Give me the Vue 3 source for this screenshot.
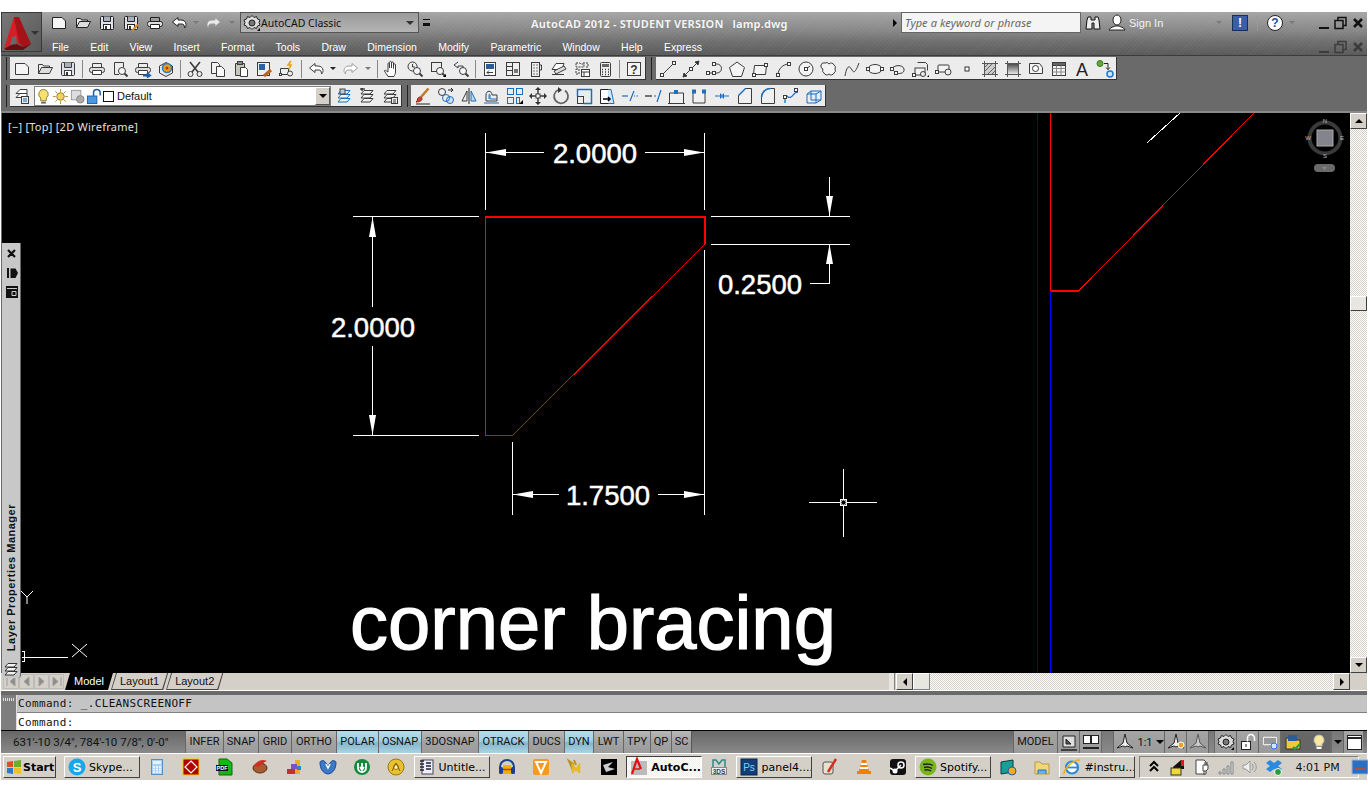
<script setup>
const mag = '<circle cx="11" cy="11" r="3.5" fill="#f4f6fa"/><path d="M13.5 13.5l3 3" stroke-width="2"/>'
const nodes = (...p) => p.map(([x, y]) => `<rect x="${x - 1.5}" y="${y - 1.5}" width="3" height="3" fill="#fff"/>`).join('')
const printer = '<path d="M4.5 7V3.5h9V7"/><rect x="1.5" y="7.5" width="15" height="5" rx="2" fill="#ddd"/><path d="M4.5 10.5h9v4h-9z" fill="#fff"/>'
const floppy = '<rect x="2.5" y="2.5" width="13" height="13" rx="1" fill="#dfe2ea"/><path d="M5.5 2.5v5h7v-5" fill="#a9b0b8"/><rect x="5.5" y="10.5" width="7" height="5" fill="#fff"/><rect x="7" y="12" width="2" height="3" fill="#333" stroke="none"/>'
const undoShape = '<path d="M8 3.5L2.5 8 8 12.5V10h4c1.5 0 2.5 1 2.5 4 1-1 1.5-2 1.5-3.5C16 8 14 6 11 6H8z" fill="#fff"/>'
const layers = '<path d="M6 3.5h9l-3 3.5H3z" fill="#f2f2f2"/><path d="M6 7.5h9l-3 3.5H3z" fill="#f2f2f2"/><path d="M6 11.5h9l-3 3.5H3z" fill="#f2f2f2"/>'

const icons = {
  new: '<path d="M2.5 3.5h9.5l3.5 3.5v7.5h-13z" fill="#f5f5f5"/>',
  open: '<path d="M2.5 13.5v-9h4l1 1.5h6v2" fill="#eee"/><path d="M2.5 13.5l3-6h11l-3 6z" fill="#ddd"/>',
  save: floppy,
  saveas: floppy + '<path d="M10 16.5l6-6" stroke="#e08a1e" stroke-width="2"/>',
  print: printer,
  preview: '<path d="M8 14.5H3.5v-12h9v5"/>' + mag,
  plot: printer + '<path d="M9 15.5h6M13 13l3 2.5-3 2" stroke="#1c5fb0" stroke-width="2"/>',
  pub3d: '<path d="M2.5 6L9 2.5 15.5 6v7L9 16.5 2.5 13z" fill="#e8e8e8"/><circle cx="10" cy="8" r="4.5" fill="#e8a020" stroke="#2a7cc0" stroke-width="1.5"/><circle cx="10" cy="8" r="1.5" fill="#c03020" stroke="none"/>',
  cut: '<circle cx="4.5" cy="14" r="2.5"/><circle cx="13.5" cy="14" r="2.5"/><path d="M6 12L14 2M12 12L4 2" stroke-width="1.6"/>',
  copy: '<path d="M2.5 2.5h6l2 2v9h-8z" fill="#f2f2f2"/><path d="M7.5 6.5h5l3 3v7h-8z" fill="#fafafa"/>',
  paste: '<path d="M3.5 3.5h9v12h-9z" fill="#c9c6bd"/><rect x="5.5" y="1.5" width="5" height="3" fill="#888"/><path d="M8.5 7.5h5l2 2v7h-7z" fill="#fff"/>',
  match: '<rect x="2.5" y="2.5" width="12" height="13" fill="#eee"/><rect x="4" y="4" width="6" height="6" fill="#2a62a8" stroke="none"/><path d="M9 16l7-6" stroke="#b8641e" stroke-width="3"/>',
  block: '<path d="M2.5 8.5h8v6h-8z" fill="#eee"/><circle cx="12" cy="13.5" r="2.5" fill="#eee"/><rect x="1.5" y="13.5" width="2" height="2" fill="#fff"/><path d="M13 1l-3 4h3l-2 4" stroke="#e8a010" stroke-width="1.6"/>',
  undo: undoShape,
  redo: '<g transform="matrix(-1 0 0 1 18 0)" stroke="#a0a0a0">' + undoShape + '</g>',
  pan: '<path d="M5 16.5c-1-2-3-4-3.5-5.5 0-1 1-1 2 0L5 12V4c0-1.5 1.5-1.5 1.5 0v4-5.5c0-1.5 2-1.5 2 0V8V3c0-1.5 2-1.5 2 0v5.5V5c0-1.5 2-1.5 2 0v7c0 2-1 3-1.5 4.5z" fill="#fff"/>',
  zoomrt: '<circle cx="6.5" cy="6.5" r="4.5"/><path d="M6.5 4v3h2.5"/>' + mag,
  zoomwin: '<rect x="2.5" y="2.5" width="10" height="9"/>' + mag + '<path d="M14 17l3-3v3z" fill="#000" stroke="none"/>',
  zoomprev: '<path d="M6 2L2 5l4 3V6h5v3" fill="none"/>' + mag,
  props: '<rect x="3.5" y="2.5" width="11" height="13" fill="#fff"/><rect x="5" y="4" width="8" height="5" fill="#2a5c9c" stroke="none"/><path d="M12 12.5H6m2-2l-2 2 2 2"/>',
  design: '<rect x="2.5" y="2.5" width="13" height="13" fill="#eee"/><path d="M8.5 2.5v13M2.5 6.5h6M2.5 10.5h6"/><rect x="10" y="9" width="4" height="4" fill="#777" stroke="none"/>',
  palette: '<rect x="4.5" y="2.5" width="8" height="14" fill="#eee"/><path d="M12.5 5h2v5h-2"/><path d="M6.5 5h1M9.5 5h1M6.5 8h1M9.5 8h1M6.5 11h1M9.5 11h1M6.5 14h1M9.5 14h1" stroke="#777" stroke-width="2"/>',
  sheet: '<path d="M6 3.5h8l-2 6H2z" fill="#fff"/><path d="M4 11l10-5 2 3-10 5z" fill="#ddd"/><path d="M2 14.5h12"/>',
  markup: '<path d="M3 3h4l1 1h3v3H3zM10 3h5v4h-3M3 9h3v5H3z" stroke-dasharray="2 1"/><rect x="8.5" y="9.5" width="8" height="7" fill="#fff"/><path d="M8.5 12h8M11 12v4.500"/>',
  calc: '<rect x="4.500" y="2.500" width="10" height="14" rx="1" fill="#eee"/><rect x="6" y="4" width="7" height="3" fill="#666" stroke="none"/><path d="M6 9.500h1M9 9.500h1M12 9.500h1M6 12h1M9 12h1M12 12h1M6 14.500h1M9 14.500h1M12 14.500h1" stroke-width="1.500"/>',
  help: '<rect x="2.500" y="2.500" width="13" height="13" fill="#f4f4f4"/><text x="9" y="14" font-size="12" font-weight="700" text-anchor="middle" fill="#333" stroke="none" font-family="Liberation Sans">?</text>',
  line: '<path d="M4 14L14 4"/>' + nodes([3, 15], [15, 3]),
  xline: '<path d="M1 17L17 1"/><path d="M1 17l4-1-3-3zM17 1l-4 1 3 3z" fill="#333"/>' + nodes([9, 9]),
  pline: '<path d="M3 13h6M9 4h3a4.500 4.500 0 0 1 0 9H9"/>' + nodes([3, 13], [9, 13], [9, 4]),
  polygon: '<path d="M9 2l7.500 5.500-3 9h-9l-3-9z" fill="#f4f4f4"/>',
  rect: '<path d="M3.500 5.500h12l-1 9h-12z" fill="#f4f4f4"/>' + nodes([3, 15], [15, 5]),
  arc: '<path d="M4 15c0-6 5-11 11-11"/>' + nodes([4, 15], [15, 4]),
  circle: '<circle cx="9" cy="9" r="7" fill="#f4f4f4"/><path d="M9 9l4-3"/>' + nodes([9, 9]),
  cloud: '<path d="M5 3a3 3 0 0 1 4 1 3 3 0 0 1 5 1 3 3 0 0 1 1 4 3 3 0 0 1-1 4 3 3 0 0 1-5 1 3 3 0 0 1-5-1 3 3 0 0 1-1-4 3 3 0 0 1 2-6z" fill="#f4f4f4"/>',
  spline: '<path d="M2 16C4 4 7 6 9 10s4 1 7-7" />',
  ellipse: '<ellipse cx="9" cy="9" rx="7" ry="4.500" fill="#f4f4f4"/>' + nodes([2, 9], [16, 9]),
  earc: '<path d="M3 9c1-4 11-5 12 0s-6 5-8 4"/>' + nodes([3, 9], [7, 13]),
  insert: '<path d="M5.500 2.500h8l2 2v6"/><rect x="3" y="8" width="10" height="7" fill="#f4f4f4"/><circle cx="11" cy="14" r="2.500" fill="#eee"/>' + nodes([2, 15]) + '<path d="M15 17l2-2v2z" fill="#000" stroke="none"/>',
  mkblock: '<rect x="3" y="5" width="11" height="7" rx="1" fill="#f4f4f4"/><circle cx="13" cy="12" r="3" fill="#eee"/>' + nodes([2, 12]),
  point: '<rect x="7" y="7" width="4" height="4" fill="#fff" stroke="#333"/>',
  hatch: '<rect x="3.500" y="3.500" width="11" height="11" fill="#ccc"/><path d="M3 8l5-5M3 12l9-9M6 15l9-9M10 15l5-5" stroke="#666"/><path d="M1 3.500h16M1 14.500h16M3.500 1v16M14.500 1v16" stroke="#555"/>',
  gradient: '<defs><linearGradient id="gh" x1="0" y1="0" x2="0" y2="1"><stop offset="0" stop-color="#444"/><stop offset="1" stop-color="#eee"/></linearGradient></defs><rect x="3.500" y="3.500" width="11" height="11" fill="url(#gh)"/><path d="M1 3.500h16M1 14.500h16M3.500 1v16M14.500 1v16" stroke="#555"/>',
  region: '<path d="M2.500 3.500h10l3 4v6h-13z" fill="#f4f4f4"/><circle cx="8.500" cy="8.500" r="3" fill="#fff"/>',
  table: '<rect x="2.500" y="2.500" width="13" height="13" fill="#f4f4f4"/><rect x="2.500" y="2.500" width="13" height="3" fill="#666"/><path d="M2.500 8.500h13M2.500 12h13M6.500 5.500v10M11 5.500v10" stroke="#888"/>',
  mtext: '<text x="9" y="15.500" font-size="18" text-anchor="middle" fill="#222" stroke="none" font-family="Liberation Sans">A</text>',
  addsel: '<circle cx="4" cy="3.500" r="3" fill="#5ea83c" stroke="#3a7a22"/><circle cx="14" cy="14" r="3" fill="#cfe6fa" stroke="#1c7ad0" stroke-width="1.500"/><path d="M8 3.500h4v6m-2-2l2 2 2-2" stroke="#222"/>',
  states: '<path d="M7 2.500h7v4H3z" fill="#fff"/><path d="M7 6.500h7v4H3z" fill="#fff"/><rect x="8.500" y="9.500" width="7" height="7" fill="#e8e8e8"/><path d="M10 12h4M10 14h4" stroke="#1c6fc0"/>',
  layprop: '<g stroke="#1c6fc0">' + layers + '</g><rect x="5" y="2" width="5" height="5" fill="#bcd" stroke="#444"/>',
  laycur: '<g>' + layers + '</g><path d="M2 2h5M4 1v3" stroke="#000"/>',
  laystate: layers + '<rect x="10.500" y="10.500" width="6" height="6" fill="#eee"/><path d="M12 13h3M12 15h3"/>',
  brush: '<path d="M14.500 1.500L7 10" stroke="#c07a24" stroke-width="2.500"/><path d="M4 11c2-2 4-1 4 1s-3 3-6 3c2-1 1-3 2-4z" fill="#d2432c" stroke="#8c2a1a"/><path d="M2 17h14" stroke="#222"/>',
  erase: '<circle cx="5" cy="5" r="3.500" fill="#eee"/><circle cx="13" cy="13" r="3.500" fill="#cfe2f7" stroke="#1c6fc0"/><circle cx="9" cy="11" r="3.500" stroke="#1c6fc0"/><path d="M11 3h5m-2-2l2 2-2 2" stroke="#222"/>',
  mirror: '<path d="M9 1v16" stroke="#222"/><path d="M7 4v10H2z" fill="#eee"/><path d="M11 4v10h5z" fill="#bcd9f4" stroke="#1c6fc0"/>',
  offset: '<path d="M3 14V8c0-5 6-5 6 0h5v6z" fill="#eee"/><path d="M1 16h15M6 12V8c0-1 1-1 1 0v4h7" stroke="#1c6fc0"/>',
  array: '<rect x="1.500" y="1.500" width="6" height="6" stroke="#1c6fc0"/><rect x="10.500" y="1.500" width="6" height="6" stroke="#1c6fc0"/><rect x="1.500" y="10.500" width="6" height="6" stroke="#1c6fc0"/><rect x="10.500" y="10.500" width="3" height="6" stroke="#1c6fc0"/><path d="M13 17l4-4v4z" fill="#000" stroke="none"/>',
  move: '<path d="M9 2v14M2 9h14" stroke-width="1.500"/><path d="M9 0l3 3H6zM9 18l-3-3h6zM0 9l3-3v6zM18 9l-3 3V6z" fill="#333" stroke="none"/><rect x="7" y="7" width="4" height="4" fill="#fff"/>',
  rotate: '<path d="M13 3.500A7 7 0 1 1 6 3" stroke-width="1.800" stroke="#666"/><path d="M6 0v6l4-3z" fill="#333" stroke="none"/>',
  scale: '<rect x="2.500" y="9.500" width="6" height="7" fill="#eee"/><path d="M2.500 9.500v-7h14v14h-8" stroke="#1c6fc0" stroke-width="1.500"/>',
  stretch: '<path d="M2.500 2.500h8v14h-8z" fill="#fff" stroke="#222"/><path d="M10 2.500h3l3 14h-6" stroke="#1c6fc0" fill="#d3e6f8"/><path d="M5 12h7m-2-2l2 2-2 2" stroke="#000" stroke-width="1.500"/>',
  trim: '<path d="M9 14l4-10" stroke="#1c6fc0" stroke-width="1.200"/><path d="M1 9h6" stroke="#1c6fc0" stroke-width="1.200"/><path d="M13 9h1M15.500 9h1.500" stroke="#1c6fc0"/>',
  extend: '<path d="M1 9h7" stroke="#222" stroke-width="1.200"/><path d="M10 9h2" stroke="#1c6fc0"/><path d="M13 15l4-12" stroke="#1c6fc0" stroke-width="1.200"/>',
  breakpt: '<path d="M2.500 16V6h14v10" fill="#f0f0f0"/><path d="M1 16.500h17"/><rect x="7" y="3" width="4" height="4" fill="#1c6fc0" stroke="none"/>',
  breakln: '<path d="M3 4v12h12V4" fill="#f0f0f0"/><rect x="2" y="2.500" width="4" height="4" fill="#1c6fc0" stroke="none"/><rect x="12" y="2.500" width="4" height="4" fill="#1c6fc0" stroke="none"/><path d="M6 4h6" stroke="#f0f0f0"/>',
  join: '<path d="M2 9h14" stroke="#1c6fc0"/><path d="M7 6v6l3-3zM11 6v6L8 9z" fill="#1c6fc0" stroke="none"/>',
  chamfer: '<path d="M2.500 16.500v-8l7-7h6v15z" fill="#f0f0f0"/><path d="M2.500 8.500l7-7" stroke="#1c6fc0" stroke-width="1.500"/>',
  fillet: '<path d="M2.500 16.500v-6c0-5 4-9 9-9h4v15z" fill="#f0f0f0"/><path d="M2.500 10.500c0-5 4-9 9-9" stroke="#1c6fc0" stroke-width="1.500"/>',
  blend: '<path d="M3 16V9c2-2 3 3 6 1s3-5 7-5" stroke="#1c6fc0" stroke-width="1.300"/>' + nodes([3, 10], [14, 3]),
  explode: '<path d="M6 4h10v9H6z" stroke="#1c6fc0" fill="#e4eef8"/><path d="M2 7h9v9H2zM2 7l4-3M11 7l5-3M11 16l5-3" stroke="#1c6fc0"/>'
}

const toolbar1 = ['new', 'open', 'save', '|', 'print', 'preview', 'plot', 'pub3d', '|', 'cut', 'copy', 'paste', 'match', 'block', '|', 'undo', 'v', 'redo', 'v2', '|', 'pan', 'zoomrt', 'zoomwin', 'zoomprev', '|', 'props', 'design', 'palette', 'sheet', 'markup', 'calc', '|', 'help']
const toolbar2 = ['line', 'xline', 'pline', 'polygon', 'rect', 'arc', 'circle', 'cloud', 'spline', 'ellipse', 'earc', 'insert', 'mkblock', 'point', 'hatch', 'gradient', 'region', 'table', 'mtext', 'addsel']
const toolbar4 = ['brush', 'erase', 'mirror', 'offset', 'array', 'move', 'rotate', 'scale', 'stretch', 'trim', 'extend', 'breakpt', 'breakln', 'join', 'chamfer', 'fillet', 'blend', 'explode']
const qat = [['new', 24], ['open', 24], ['save', 24], ['saveas', 24], ['print', 24], ['undo', 23]]
const menus = ['File', 'Edit', 'View', 'Insert', 'Format', 'Tools', 'Draw', 'Dimension', 'Modify', 'Parametric', 'Window', 'Help', 'Express']

const statusToggles = [
  ['INFER', 38], ['SNAP', 35], ['GRID', 33], ['ORTHO', 45], ['POLAR', 42, true], ['OSNAP', 43, true],
  ['3DOSNAP', 57], ['OTRACK', 50, true], ['DUCS', 36], ['DYN', 29, true], ['LWT', 30], ['TPY', 27], ['QP', 21], ['SC', 20]
]

const taskIcons = {
  calc: '<rect x="3.500" y="1.500" width="11" height="15" fill="#a8d0f0" stroke="#5a90c0"/><rect x="5" y="3" width="8" height="3" fill="#e4f2fc" stroke="none"/><path d="M5 9h8M5 11.500h8M5 14h8" stroke="#fff" stroke-dasharray="2 1" stroke-width="1.500"/>',
  red: '<rect x="1" y="1" width="16" height="16" fill="#b00000" stroke="#e8d000"/><path d="M9 3l6 6-6 6-6-6z" fill="#b00000" stroke="#fff" stroke-width="1.200"/>',
  pdf: '<path d="M3 1h8l5 4v12H3z" fill="#14b814" stroke="#0a6a0a"/><rect x="0" y="7" width="12" height="6" fill="#111" stroke="none"/><text x="6" y="12" font-size="5.500" font-weight="700" text-anchor="middle" fill="#fff" stroke="none" font-family="Liberation Sans">PDF</text>',
  ccl: '<ellipse cx="9" cy="10" rx="7" ry="5" fill="#a85a30" stroke="#5a2a10"/><path d="M3 8c3-6 9-7 13-5-3 1-6 3-8 6" fill="#d03020" stroke="none"/>',
  blocks: '<rect x="10" y="2" width="5" height="14" fill="#e8b020" stroke="none"/><rect x="2" y="11" width="8" height="5" fill="#c03030" stroke="none"/><rect x="6" y="6" width="6" height="5" fill="#8050c0" stroke="none"/><rect x="12" y="8" width="4" height="4" fill="#3080d0" stroke="none"/>',
  shield: '<path d="M1 4c2-2 4-2 6 1l2 3 2-3c2-3 4-3 6-1 0 6-2 11-8 12C3 15 1 10 1 4z" fill="#3c78c8" stroke="#1c4a90"/><path d="M7 6l2 4 2-4" stroke="#fff" stroke-width="1.500"/>',
  torrent: '<circle cx="9" cy="9" r="8" fill="#128a3c" stroke="none"/><path d="M5 5v5a4 4 0 0 0 8 0V5M9 5v6M7 9l2 3 2-3" stroke="#fff" stroke-width="1.800"/>',
  disc: '<circle cx="9" cy="9" r="8" fill="#e8c030" stroke="#9a7a10"/><circle cx="9" cy="9" r="2.500" fill="#fff4b0" stroke="#9a7a10"/><path d="M5 13l4-8 4 8" stroke="#7a5a00"/>',
  untitled: '<rect x="4" y="2" width="11" height="14" fill="#eef" stroke="#445"/><path d="M2 3h4M2 6h4M2 9h4M2 12h4M8 5h5M8 8h5M8 11h5" stroke="#223" stroke-width="1.300"/>',
  audio: '<path d="M2 11V9a7 7 0 0 1 14 0v2" stroke="#1c3f90" stroke-width="2"/><rect x="1" y="9" width="4" height="7" rx="1.500" fill="#1c3f90" stroke="none"/><rect x="13" y="9" width="4" height="7" rx="1.500" fill="#1c3f90" stroke="none"/><rect x="5" y="7" width="8" height="9" fill="#f0b000" stroke="none"/><path d="M5 11.500h8" stroke="#d03020" stroke-width="1.500"/>',
  vector: '<rect x="1" y="1" width="16" height="16" rx="2" fill="#f49a1c" stroke="none"/><path d="M4 4h10L9 15z" fill="none" stroke="#fff" stroke-width="2"/>',
  star: '<path d="M3 3l4 3-1 4zM8 2l2 5" stroke="#b89020" stroke-width="2"/><path d="M7 15V8l3 4 3-4v7" stroke="#e8b820" stroke-width="2.500"/>',
  dark: '<rect x="1" y="1" width="16" height="16" fill="#000" stroke="none"/><path d="M3 7l10-3-5 5 7 2-9 3z" fill="#ccc" stroke="none"/>',
  acad: '<rect x="1" y="3" width="16" height="14" fill="#bbb" stroke="none"/><path d="M2 16L7 1l4 10" stroke="#e01010" stroke-width="2.200"/><path d="M4 11h6" stroke="#e01010" stroke-width="1.500"/>',
  max: '<rect x="1.500" y="9.500" width="15" height="7" fill="#eee" stroke="#888"/><text x="9" y="15.500" font-size="6.500" font-weight="700" text-anchor="middle" fill="#345" stroke="none" font-family="Liberation Sans">3DS</text><path d="M3 9V2l3 0 3 4 3-4h3v7" stroke="#2a8a8a" stroke-width="1.500"/>',
  ps: '<rect x="1" y="1" width="16" height="16" fill="#123e78" stroke="#0a2448"/><text x="9" y="13" font-size="10" text-anchor="middle" fill="#8ec8f4" stroke="none" font-family="Liberation Sans">Ps</text>',
  pen: '<rect x="2" y="4" width="10" height="12" rx="2" fill="#e8e0d0" stroke="#555"/><path d="M15 1L7 14" stroke="#d03020" stroke-width="2.500"/>',
  vlc: '<path d="M7 2h4l3 11H4z" fill="#f08000" stroke="none"/><path d="M6 6h6M5 10h8" stroke="#fff" stroke-width="2"/><rect x="2" y="13" width="14" height="3" fill="#f08000" stroke="none"/>',
  steam: '<rect x="1" y="1" width="16" height="16" rx="3" fill="#111" stroke="none"/><circle cx="12" cy="7" r="3" fill="#111" stroke="#fff" stroke-width="1.500"/><circle cx="6" cy="13" r="2.500" fill="#fff" stroke="none"/><path d="M1 10l5 3 6-6" stroke="#fff" stroke-width="1.500"/>',
  spotify: '<circle cx="9" cy="9" r="8.500" fill="#7ab51d" stroke="none"/><path d="M4 6.500c4-1 7-1 10 1M5 9.500c3-1 6-.5 8 1M5.500 12c2.500-.5 5-.5 6.500 1" stroke="#222" stroke-width="1.500"/>',
  media: '<path d="M2 4l12-2v12L2 16z" fill="#18a098" stroke="#0a3a40"/><circle cx="13" cy="13" r="4" fill="#e8b020" stroke="#2a5aa0"/>',
  folder: '<path d="M2 4h5l2 2h7v10H2z" fill="#f0d878" stroke="#b89a40"/><path d="M5 16v-4h8v4" fill="#6ab0e0" stroke="#2a70b0"/>',
  ie: '<circle cx="9" cy="9.500" r="6" fill="#fff" stroke="#2a8ad8" stroke-width="2.200"/><path d="M4 9.500h11" stroke="#2a8ad8" stroke-width="1.800"/><path d="M1 16c0-5 8-14 16-14" stroke="#e8b020" stroke-width="1.500"/>'
}

const taskbar = [
  { text: 'Skype...', svg: '<circle cx="9" cy="9" r="8.500" fill="#18a8e8" stroke="none"/><text x="9" y="14" font-size="13" font-weight="700" text-anchor="middle" fill="#fff" stroke="none" font-family="Liberation Sans">S</text>' },
  { slots: ['calc', 'red', 'pdf', 'ccl', 'blocks', 'shield', 'torrent', 'disc'] },
  { text: 'Untitle...', svg: taskIcons.untitled },
  { slots: ['audio', 'vector', 'star', 'dark'] },
  { text: 'AutoC...', svg: taskIcons.acad, active: true },
  { slots: ['max'] },
  { text: 'panel4....', svg: taskIcons.ps },
  { slots: ['pen', 'vlc', 'steam'] },
  { text: 'Spotify...', svg: taskIcons.spotify },
  { slots: ['media', 'folder'] },
  { text: '#instru...', svg: taskIcons.ie }
]

const trayIcons = [
  '<path d="M5 8l4-4 4 4M5 13l4-4 4 4" stroke="#000" stroke-width="2"/>',
  '<path d="M4 9l8-7h3v9H4z" fill="#111"/><path d="M12 2h3v6h-3z" fill="#d02020" stroke="none"/><rect x="2" y="10" width="10" height="7" fill="#f0d838" stroke="#333"/>',
  '<path d="M3 2h8l2 2v12H3z" fill="#fff" stroke="#444"/><path d="M10 7h5v4l-2 2h-3zM12 4v3M14 4v3M11 13v4" fill="#fff" stroke="#444"/>',
  '<path d="M2 14h2v2H2zM6 11h2v5H6zM10 8h2v8h-2zM14 4h2v12h-2z" fill="#ddd" stroke="#888"/>',
  '<path d="M2 7h3l4-4v12l-4-4H2z" fill="#eee" stroke="#999"/><path d="M11 6c1.500 2 1.500 4 0 6M13 4c3 3 3 7 0 10" stroke="#999"/>',
  '<path d="M5 2l4 3 4-3 4 3-4 3 4 3-4 3-4-3-4 3-4-3 4-3-4-3z" fill="#2a8ae0" stroke="none"/><circle cx="13" cy="14" r="3.500" fill="#2a9a3a" stroke="#fff"/>'
]

const sbRight = [
  '<path d="M3 3v11h12V3z" fill="#ddd" stroke="#222"/><path d="M6 6v5h5z" fill="#555"/><path d="M1 17h16" stroke="#222" stroke-width="1.500"/>',
  '<rect x="1.500" y="2.500" width="7" height="8" fill="#fff" stroke="#222"/><rect x="9.500" y="2.500" width="7" height="8" fill="#fff" stroke="#222"/><path d="M1 15h16" stroke="#222" stroke-width="2"/>'
]
const sbGear = '<path d="M9 1.500l2 2 2.500-1 1 2.500 2.500 1-1 2.500 1 2.500-2.500 1-1 2.500-2.500-1-2 2-2-2-2.500 1-1-2.500-2.500-1 1-2.500-1-2.500 2.500-1 1-2.500 2.500 1z" fill="#ddd" stroke="#222"/><circle cx="9" cy="9" r="3" fill="#777" stroke="#222"/><path d="M14 17l3-3v3z" fill="#000" stroke="none"/>'
const sbLock = '<rect x="2.500" y="8.500" width="9" height="8" fill="#fff" stroke="#222"/><path d="M8.500 8.500V5a3.500 3.500 0 0 1 7 0v3" stroke="#fff" stroke-width="1.500"/><path d="M7 11v3" stroke="#222"/>'
const sbHw = '<rect x="2.500" y="4.500" width="13" height="7" fill="#999" stroke="#eee"/><path d="M4 3v2M7 3v2M10 3v2M13 3v2M4 11v2M7 11v2" stroke="#ddd"/><circle cx="13" cy="13" r="3" fill="#cfe6fa" stroke="#2a7ad0"/>'
const sbAnno = '<path d="M9 1l2 9 6 5-6-2-2 1-2-1-6 2 6-5z" fill="#eee" stroke="#222"/>'
const sbScale = sbAnno + '<circle cx="14" cy="12" r="3" fill="#f0a020" stroke="#fff"/>'
const sbAuto = '<g opacity=".55">' + sbAnno + '</g>'
const sbFolder = '<path d="M2 5h5l1 2h8v9H2z" fill="#f0c838" stroke="#333"/><rect x="4" y="2" width="9" height="6" fill="#2a5c9c" stroke="none"/><path d="M9 14l2 2 5-5" stroke="#2a9a3a" stroke-width="2"/>'
const sbBulb = '<path d="M9 2a5 5 0 0 1 3 9v2H6v-2a5 5 0 0 1 3-9z" fill="#f8e8a0" stroke="#bbb"/><path d="M6.500 15h5" stroke="#fff" stroke-width="2"/>'
const sbWindow = '<rect x="2.500" y="2.500" width="14" height="14" fill="#fff" stroke="#222"/><path d="M2.500 5h14" stroke="#222" stroke-width="2"/>'

const layerIcons = [
  '<path d="M9 1.500a5 5 0 0 1 3 9v3H6v-3a5 5 0 0 1 3-9z" fill="#f6e070" stroke="#8c7a30"/><path d="M6.500 15.500h5" stroke="#666" stroke-width="2"/>',
  '<circle cx="9" cy="9" r="4" fill="#f6d060" stroke="#8c7a30"/><path d="M9 1v3M9 14v3M1 9h3M14 9h3M3.500 3.500l2 2M12.500 12.500l2 2M3.500 14.500l2-2M12.500 5.500l2-2" stroke="#b09030"/>',
  '<rect x="2.500" y="2.500" width="10" height="10" fill="#ddd" stroke="#999"/><circle cx="12" cy="12" r="4" fill="#aaa" stroke="#888"/>',
  '<rect x="1.500" y="8.500" width="10" height="8" fill="#4a98e0" stroke="#1c5fa0"/><path d="M8 8.500V5a3.500 3.500 0 0 1 7 0v3" stroke="#1c5fa0" stroke-width="1.600"/>'
]
</script>

<template>
  <div class="window">
    <header class="titlebar">
      <div class="appbtn">
        <svg width="34" height="38" viewBox="0 0 34 38" fill="none">
          <path d="M1 35L11 3l5 0 4 26-6 1-1-8-4 1-2 8z" fill="#d51f26" />
          <path d="M11 3l5 0 12 27-8 3-4-4z" fill="#a51218" />
          <path d="M1 35l7-4 6-1 6 3 8-3-8 6H3z" fill="#6d0c10" />
        </svg>
        <span class="tri dark"></span>
      </div>
      <div class="titlecol">
        <div class="qatrow">
          <span v-for="q in qat" :key="q[0]" class="qbtn" :class="'w' + q[1]">
            <svg class="ic" viewBox="0 0 18 18" fill="none" stroke="#222" v-html="icons[q[0]]"></svg>
          </span>
          <span class="qdrop"><span class="tri small"></span></span>
          <span class="qbtn w24 dim"><svg class="ic" viewBox="0 0 18 18" fill="none" stroke="#222" v-html="icons.redo"></svg></span>
          <span class="qdrop"><span class="tri small"></span></span>
          <div class="workspace-select">
            <svg class="ic ws-gear" viewBox="0 0 18 18" fill="none" stroke="#444" v-html="sbGear"></svg>
            <span class="ws-name">AutoCAD Classic</span>
            <span class="tri dark ws-arrow"></span>
          </div>
          <span class="qmore"></span>
          <span class="apptitle">AutoCAD 2012 - STUDENT VERSION &nbsp; lamp.dwg</span>
          <span class="flyout"></span>
          <div class="search">Type a keyword or phrase</div>
          <svg class="binoc" width="16" height="16" viewBox="0 0 16 16" fill="#eee" stroke="#111">
            <path d="M2 5l1-3h3v3h4V2h3l1 3 1 9H9V8H7v6H1z" />
          </svg>
          <svg class="person" width="18" height="18" viewBox="0 0 18 18" fill="#fff" stroke="#222">
            <ellipse cx="9" cy="6" rx="4" ry="5" />
            <path d="M1 16c1-3 5-3 6-4h4c1 1 5 1 6 4z" />
          </svg>
          <span class="signin">Sign In</span>
          <span class="tri small signin-arrow"></span>
          <span class="infobtn">!</span>
          <span class="qsep"></span>
          <span class="helpbtn">?</span>
          <span class="tri small help-arrow"></span>
          <svg class="winctl" width="48" height="14" viewBox="0 0 48 14" fill="none" stroke="#111">
            <path d="M0 12h10" stroke-width="2" />
            <path d="M16 4.500h8v8h-8zM19 4V1.500h8v8h-3" stroke-width="1.500" />
            <path d="M35 3l8 8M43 3l-8 8" stroke-width="2.500" />
          </svg>
        </div>
        <div class="menurow">
          <nav class="menus">
            <span v-for="m in menus" :key="m">{{ m }}</span>
          </nav>
          <svg class="winctl second" width="48" height="14" viewBox="0 0 48 14" fill="none" stroke="#3c3c3c">
            <path d="M0 12h10" stroke-width="2" />
            <path d="M16 4.500h8v8h-8zM19 4V1.500h8v8h-3" stroke-width="1.500" />
            <path d="M35 3l8 8M43 3l-8 8" stroke-width="2.500" />
          </svg>
        </div>
      </div>
    </header>

    <section class="toolarea">
      <div class="tbrow">
        <div class="grip"></div>
        <div class="tb">
          <template v-for="(t, i) in toolbar1" :key="i">
            <span v-if="t === '|'" class="tsep"></span>
            <span v-else-if="t === 'v'" class="tdrop"><span class="tri small black"></span></span>
            <span v-else-if="t === 'v2'" class="tdrop"><span class="tri small"></span></span>
            <span v-else class="tbtn"><svg class="ic" viewBox="0 0 18 18" fill="none" stroke="#3c3c3c" v-html="icons[t]"></svg></span>
          </template>
        </div>
        <div class="grip wide"></div>
        <div class="tb">
          <span v-for="t in toolbar2" :key="t" class="tbtn"><svg class="ic" viewBox="0 0 18 18" fill="none" stroke="#3c3c3c" v-html="icons[t]"></svg></span>
        </div>
      </div>
      <div class="tbrow second">
        <div class="grip"></div>
        <div class="tb">
          <span class="tbtn"><svg class="ic" viewBox="0 0 18 18" fill="none" stroke="#3c3c3c" v-html="icons.states"></svg></span>
          <div class="layerselect">
            <svg v-for="(l, i) in layerIcons" :key="i" class="ic lay" viewBox="0 0 18 18" fill="none" v-html="l"></svg>
            <span class="swatch"></span>
            <span class="layername">Default</span>
            <span class="combo"><span class="tri black"></span></span>
          </div>
          <span class="tbtn"><svg class="ic" viewBox="0 0 18 18" fill="none" stroke="#3c3c3c" v-html="icons.layprop"></svg></span>
          <span class="tbtn"><svg class="ic" viewBox="0 0 18 18" fill="none" stroke="#3c3c3c" v-html="icons.laycur"></svg></span>
          <span class="tbtn"><svg class="ic" viewBox="0 0 18 18" fill="none" stroke="#3c3c3c" v-html="icons.laystate"></svg></span>
        </div>
        <div class="grip mid"></div>
        <div class="tb">
          <span v-for="t in toolbar4" :key="t" class="tbtn"><svg class="ic" viewBox="0 0 18 18" fill="none" stroke="#3c3c3c" v-html="icons[t]"></svg></span>
        </div>
      </div>
    </section>

    <section class="drawing">
      <div class="canvas">
        <svg class="model" viewBox="2 113 1347 560" width="1347" height="560" fill="none" shape-rendering="crispEdges">
          <g stroke="#fff">
            <path d="M485.500 133V210M704.500 133V210M704.500 250V515M512.500 442V515" />
            <path d="M353 216.500H479M353 435.500H479M711 216.500H850M711 244.500H850" />
            <path d="M485 152.500H544M645 152.500H704M372.500 217V307M372.500 346V435M513 494.500H559M658 494.500H704" />
            <path d="M829.500 177V216M829.500 244V283.500H810" />
            <path d="M1147 143L1180 113" />
            <path d="M843.500 469V537M809 502.500H877" />
            <path d="M22 657.500H68" />
            <path d="M21.500 651.500H24V661.500H21.500" />
            <path d="M21 591l6 6 6-6M27 597v7M72 644l15 13M87 644l-15 13" shape-rendering="auto" />
          </g>
          <g fill="#fff" shape-rendering="auto">
            <path d="M486 152.500l20-3.500v7zM704 152.500l-20-3.500v7z" />
            <path d="M513 494.500l20-3.500v7zM704 494.500l-20-3.500v7z" />
            <path d="M372.500 217l-3.500 20h7zM372.500 435l-3.500-20h7z" />
            <path d="M829.500 216l-3.500-20h7zM829.500 244l-3.500 20h7z" />
          </g>
          <rect x="840.500" y="499.500" width="6" height="6" stroke="#fff" fill="#000" />
          <circle cx="843.500" cy="502.500" r="2.500" stroke="#ccc" shape-rendering="auto" />

          <g stroke="#f00">
            <path d="M485 216H705M485 217H705" />
            <path d="M704.500 216V244M705.500 216V244" />
            <path d="M485.500 216V435.500M485 435.500H512.500" />
            <path d="M704.500 244.500L512.500 435.500" />
            <path d="M1050.500 113V290" />
            <path d="M1050 290H1079M1050 291H1079" />
            <path d="M1079 290.500L1254 113" />
          </g>
          <path d="M1037.500 113V673" stroke="#0000c8" />
          <path d="M1050.500 291V673" stroke="#0000ff" />

          <g fill="#fff" shape-rendering="auto" text-anchor="middle">
            <g stroke="#fff" stroke-width="0.500">
              <text x="595" y="163" font-size="27.500">2.0000</text>
              <text x="373" y="336.500" font-size="27.500">2.0000</text>
              <text x="608" y="505" font-size="27.500">1.7500</text>
              <text x="760" y="293.500" font-size="27.500">0.2500</text>
            </g>
            <text x="593" y="649" font-size="76" stroke="#fff" stroke-width="1.200">corner bracing</text>
          </g>
        </svg>

        <span class="viewlabel">[−] [Top] [2D Wireframe]</span>

        <div class="viewcube">
          <svg width="44" height="62" viewBox="0 0 44 62" fill="none">
            <circle cx="22" cy="22" r="15.500" stroke="#3a3a3a" stroke-width="4" />
            <rect x="14" y="14" width="16" height="16" fill="#84848c" stroke="#aaa" />
            <g fill="#bbb" font-size="6" font-family="Liberation Sans" text-anchor="middle">
              <text x="22" y="7">N</text>
              <text x="22" y="42">S</text>
              <text x="5" y="24">W</text>
              <text x="39" y="24">E</text>
            </g>
            <rect x="11" y="48" width="21" height="8" rx="4" fill="#6a6a6a" />
            <path d="M19 51h5l-2.500 3z" fill="#8a8a8a" />
          </svg>
        </div>

        <aside class="palette">
          <svg width="16" height="56" viewBox="0 0 16 56" fill="none" class="palbtns">
            <path d="M5 5l7 7M12 5l-7 7" stroke="#111" stroke-width="2.200" />
            <path d="M4 23h2v10H4z" fill="#111" />
            <path d="M7.500 23.500h5L15 28l-2.500 5h-5z" fill="#111" />
            <path d="M3 41h12v12H3z" fill="#111" />
            <path d="M9 46.500h4v4H9zM4 43.500h10" stroke="#ccc" />
          </svg>
          <span class="paltitle">Layer Properties Manager</span>
          <div class="paltool">
            <svg width="18" height="18" viewBox="0 0 18 18" fill="none" stroke="#333" v-html="layers"></svg>
          </div>
        </aside>
      </div>
      <div class="vscroll">
        <span class="sbtn"><span class="tri up black"></span></span>
        <div class="vtrack"><span class="vthumb"></span></div>
        <span class="sbtn"><span class="tri black"></span></span>
      </div>
    </section>

    <div class="hbar">
      <div class="tabnav">
        <svg width="63" height="15" viewBox="0 0 63 15" fill="#8c8c8c" stroke="#9c9c9c">
          <path d="M5 3v9M13 3L8 7.500 13 12zM27 3l-5 4.500L27 12zM37 3l5 4.500L37 12zM51 3l5 4.500L51 12zM59 3v9" />
          <path d="M1.500 .5h15v14h-15zM17.500 .5h14v14h-14zM32.500 .5h14v14h-14zM47.500 .5h14v14h-14z" fill="none" stroke="#bbb" />
        </svg>
      </div>
      <div class="tabs">
        <span class="tab active">Model</span>
        <span class="tab">Layout1</span>
        <span class="tab">Layout2</span>
      </div>
      <div class="hfill"></div>
      <span class="splitter"></span>
      <span class="sbtn h"><span class="tri left black"></span></span>
      <span class="hthumb"></span>
      <div class="htrack"></div>
      <span class="sbtn h"><span class="tri right black"></span></span>
      <span class="corner"></span>
    </div>

    <div class="strip"></div>

    <section class="command">
      <div class="cmdgrip"><span></span></div>
      <div class="cmdbody">
        <div class="cmdhist">Command:  _.CLEANSCREENOFF</div>
        <div class="cmdline">Command:</div>
      </div>
    </section>

    <footer class="status">
      <div class="coords">631'-10 3/4", 784'-10 7/8", 0'-0"</div>
      <span
        v-for="b in statusToggles"
        :key="b[0]"
        class="toggle"
        :class="{ on: b[2] }"
        :style="{ width: b[1] + 'px' }"
      >{{ b[0] }}</span>
      <div class="sfill"></div>
      <span class="toggle modelbtn">MODEL</span>
      <span v-for="(s, i) in sbRight" :key="i" class="sicon"><svg class="ic" viewBox="0 0 18 18" fill="none" stroke="#222" v-html="s"></svg></span>
      <span class="sgap"></span>
      <span class="sicon anno"><svg class="ic" viewBox="0 0 18 18" fill="none" v-html="sbAnno"></svg><span>1:1</span><span class="tri black"></span></span>
      <span class="sicon"><svg class="ic" viewBox="0 0 18 18" fill="none" v-html="sbScale"></svg></span>
      <span class="sicon"><svg class="ic" viewBox="0 0 18 18" fill="none" v-html="sbAuto"></svg></span>
      <span class="sgap small"></span>
      <span class="sicon"><svg class="ic" viewBox="0 0 18 18" fill="none" v-html="sbGear"></svg></span>
      <span class="sicon"><svg class="ic" viewBox="0 0 18 18" fill="none" v-html="sbLock"></svg></span>
      <span class="sicon"><svg class="ic" viewBox="0 0 18 18" fill="none" v-html="sbHw"></svg></span>
      <span class="sgroup">
        <svg class="ic" viewBox="0 0 18 18" fill="none" v-html="sbFolder"></svg>
        <svg class="ic" viewBox="0 0 18 18" fill="none" v-html="sbBulb"></svg>
      </span>
      <span class="sarrow"><span class="tri black"></span></span>
      <span class="sicon last"><svg class="ic" viewBox="0 0 18 18" fill="none" v-html="sbWindow"></svg></span>
    </footer>

    <footer class="taskbar">
      <button class="start">
        <svg width="16" height="16" viewBox="0 0 16 16">
          <path d="M1 3l6-1v6H1z" fill="#e0501c" />
          <path d="M8 2l7-1v7H8z" fill="#6cb02a" />
          <path d="M1 9h6v6l-6-1z" fill="#2a7ad0" />
          <path d="M8 9h7v6l-7-1z" fill="#f0c020" />
        </svg>
        Start
      </button>
      <template v-for="(t, i) in taskbar" :key="i">
        <div v-if="t.slots" class="quick">
          <span v-for="s in t.slots" :key="s" class="qslot">
            <svg class="ic" viewBox="0 0 18 18" fill="none" v-html="taskIcons[s]"></svg>
          </span>
        </div>
        <button v-else class="task" :class="{ active: t.active }">
          <svg class="ic" viewBox="0 0 18 18" fill="none" v-html="t.svg"></svg>
          <span>{{ t.text }}</span>
        </button>
      </template>
      <div class="tray">
        <svg v-for="(s, i) in trayIcons" :key="i" class="ic" viewBox="0 0 18 18" fill="none" v-html="s"></svg>
        <span class="clock">4:01 PM</span>
        <svg class="ic" viewBox="0 0 18 18" fill="none">
          <rect x="1" y="2" width="16" height="14" fill="#2a70c0" stroke="#a0b0c0" />
          <path d="M4 11h10" stroke="#e04020" stroke-width="1.500" />
        </svg>
      </div>
    </footer>
  </div>
</template>

<style>
html,
body {
  margin: 0;
  background: #fff;
  overflow: hidden;
}
.model text {
  font-family: "Liberation Sans", Arial, sans-serif;
}
</style>

<style scoped>
.window {
  width: 1366px;
  margin: 12px 0 0 1px;
  font-family: "Liberation Sans", sans-serif;
  font-size: 11px;
  color: #111;
  display: flex;
  flex-direction: column;
}
.ic {
  width: 18px;
  height: 18px;
  display: block;
  flex: none;
  overflow: visible;
}
.tri {
  display: inline-block;
  width: 0;
  height: 0;
  border-left: 4px solid transparent;
  border-right: 4px solid transparent;
  border-top: 4px solid #666;
}
.tri.dark {
  border-top-color: #333;
}
.tri.black {
  border-top-color: #000;
}
.tri.small {
  border-left-width: 3px;
  border-right-width: 3px;
  border-top-width: 3px;
  border-top-color: #7a7a7a;
}
.tri.small.black {
  border-top-color: #222;
}
.tri.up {
  transform: rotate(180deg);
}
.tri.left {
  transform: rotate(90deg);
}
.tri.right {
  transform: rotate(-90deg);
}

.titlebar {
  height: 44px;
  display: flex;
  background:
    repeating-linear-gradient(135deg, rgba(255, 255, 255, 0.03) 0 1px, transparent 1px 3px),
    linear-gradient(#a6a6a6 0, #868686 45%, #6e6e6e 70%, #5a5a5a 100%);
  border-bottom: 1px solid #3c3c3c;
  box-sizing: border-box;
}
.appbtn {
  width: 41px;
  height: 40px;
  box-sizing: border-box;
  border: 1px solid #3a3a3a;
  background: linear-gradient(135deg, #777, #5a5a5a);
  position: relative;
  flex: none;
}
.appbtn svg {
  display: block;
  margin: 1px 0 0 1px;
}
.appbtn .tri {
  position: absolute;
  right: 2px;
  top: 18px;
}
.titlecol {
  flex: 1;
  min-width: 0;
}
.qatrow {
  height: 21px;
  display: flex;
  align-items: center;
  padding-left: 5px;
}
.qbtn {
  display: flex;
  justify-content: center;
  flex: none;
}
.w24 {
  width: 24px;
}
.w23 {
  width: 23px;
}
.qbtn.dim {
  opacity: 0.8;
}
.qdrop {
  width: 12px;
  display: flex;
  justify-content: center;
  flex: none;
}
.workspace-select {
  width: 179px;
  height: 21px;
  margin-left: 2px;
  box-sizing: border-box;
  border: 1px solid #555;
  background: linear-gradient(#9a9a9a, #b4b4b4);
  display: flex;
  align-items: center;
  flex: none;
}
.ws-gear {
  margin-left: 2px;
}
.ws-name {
  font-family: "Noto Sans", sans-serif;
  font-size: 10.500px;
  flex: 1;
}
.ws-arrow {
  margin-right: 4px;
}
.qmore {
  width: 7px;
  height: 3px;
  margin: 0 0 0 4px;
  border-top: 1px solid #111;
  border-bottom: 3px solid #111;
  flex: none;
  box-sizing: content-box;
}
.apptitle {
  margin: 2px 0 0 101px;
  width: 357px;
  font-family: "Noto Sans", sans-serif;
  font-weight: 700;
  letter-spacing: 0.15px;
  color: #f4f4f4;
  font-size: 11px;
  white-space: pre;
  flex: none;
  text-shadow: 0 0 1px rgba(0, 0, 0, 0.3);
}
.flyout {
  width: 0;
  height: 0;
  border-top: 4px solid transparent;
  border-bottom: 4px solid transparent;
  border-left: 4px solid #000;
  margin-left: 5px;
  flex: none;
}
.search {
  width: 180px;
  height: 21px;
  margin-left: 4px;
  box-sizing: border-box;
  border: 1px solid #666;
  background: #f4f4f4;
  color: #666;
  font-family: "Noto Sans", sans-serif;
  font-style: italic;
  font-size: 11px;
  letter-spacing: 0.1px;
  line-height: 19px;
  padding-left: 3px;
  flex: none;
}
.binoc {
  margin-left: 4px;
  flex: none;
}
.person {
  margin-left: 7px;
  flex: none;
}
.signin {
  margin-left: 3px;
  color: #f2f2f2;
  width: 87px;
  flex: none;
}
.signin-arrow {
  flex: none;
  margin-right: 10px;
}
.infobtn {
  width: 16px;
  height: 16px;
  background: #3a5ea8;
  border: 1px solid #1c2e58;
  color: #fff;
  font-weight: 700;
  text-align: center;
  line-height: 15px;
  font-size: 12px;
  box-sizing: border-box;
  flex: none;
}
.qsep {
  width: 1px;
  height: 16px;
  background: #999;
  margin: 0 9px;
  flex: none;
}
.helpbtn {
  width: 16px;
  height: 16px;
  border-radius: 50%;
  background: #fff;
  border: 1px solid #222;
  color: #1f4ca0;
  font-weight: 700;
  font-size: 12px;
  line-height: 14px;
  text-align: center;
  box-sizing: border-box;
  flex: none;
}
.help-arrow {
  margin-left: 6px;
  flex: none;
}
.winctl {
  margin-left: 24px;
  flex: none;
}
.menurow {
  height: 22px;
  display: flex;
  align-items: center;
  padding: 5px 0 0 10px;
  box-sizing: border-box;
  position: relative;
}
.menus {
  display: flex;
  gap: 21.300px;
  color: #fff;
  font-size: 10.500px;
}
.winctl.second {
  margin-left: auto;
  margin-right: 0;
}

.toolarea {
  height: 57px;
  box-sizing: border-box;
  padding: 1px 0 0 2px;
  background: #6a6a6a;
  border-bottom: 2px solid #8a8a8a;
}
.tbrow {
  display: flex;
  height: 23px;
}
.tbrow.second {
  height: 22px;
  margin-top: 5px;
}
.grip {
  width: 7px;
  background: radial-gradient(circle, #222 0.6px, transparent 0.8px) 2px 3px / 3px 2px;
  background-repeat: repeat-y;
  background-size: 3px 2px;
  flex: none;
}
.grip.wide {
  width: 8px;
  margin-left: 2px;
}
.grip.mid {
  width: 7px;
  margin-left: 2px;
}
.tb {
  display: flex;
  align-items: center;
  background: #ececec;
  box-shadow: inset -1px -1px 0 #333;
  padding-right: 1px;
  flex: none;
}
.tbtn {
  width: 23px;
  height: 100%;
  display: flex;
  align-items: center;
  justify-content: center;
  flex: none;
}
.tsep {
  width: 6px;
  height: 18px;
  flex: none;
  background: linear-gradient(#888, #888) center / 1px 100% no-repeat;
}
.tdrop {
  width: 12px;
  display: flex;
  justify-content: center;
  flex: none;
}
.layerselect {
  width: 297px;
  height: 20px;
  margin: 0 1px;
  background: #fff;
  border: 1px solid #808080;
  box-sizing: border-box;
  display: flex;
  align-items: center;
  flex: none;
}
.lay {
  width: 17px;
  height: 17px;
}
.swatch {
  width: 9px;
  height: 9px;
  border: 1px solid #111;
  flex: none;
}
.layername {
  margin-left: 3px;
  flex: 1;
}
.combo {
  width: 15px;
  height: 18px;
  background: #d4d0c8;
  border: 1px solid;
  border-color: #fff #555 #555 #fff;
  box-sizing: border-box;
  display: flex;
  align-items: center;
  justify-content: center;
}

.drawing {
  display: flex;
  height: 560px;
}
.canvas {
  flex: 1;
  background: #000;
  position: relative;
  border-left: 1px solid #6a6a6a;
}
.model {
  position: absolute;
  left: 0;
  top: 0;
  display: block;
}
.viewlabel {
  position: absolute;
  left: 6px;
  top: 6px;
  color: #e0e0e0;
  font-family: "Noto Sans", sans-serif;
  font-size: 11px;
  letter-spacing: 0.25px;
}
.viewcube {
  position: absolute;
  right: 3px;
  top: 3px;
}
.palette {
  position: absolute;
  left: 0;
  top: 130px;
  bottom: -5px;
  width: 18px;
  background: #c8c8c8;
  border-right: 1px solid #666;
  border-radius: 0 0 3px 3px;
  display: flex;
  flex-direction: column;
  align-items: center;
  z-index: 2;
}
.palbtns {
  margin-top: 2px;
  flex: none;
}
.paltitle {
  margin-top: auto;
  margin-bottom: 27px;
  writing-mode: vertical-rl;
  transform: rotate(180deg);
  font-size: 11px;
  font-weight: 700;
  letter-spacing: 0.5px;
  color: #111;
  white-space: nowrap;
}
.paltool {
  position: absolute;
  bottom: 0;
  left: 0;
  width: 18px;
  height: 18px;
}
.vscroll {
  width: 17px;
  display: flex;
  flex-direction: column;
}
.sbtn {
  width: 17px;
  height: 16px;
  background: #d4d0c8;
  box-sizing: border-box;
  border: 1px solid;
  border-color: #fff #404040 #404040 #fff;
  display: flex;
  align-items: center;
  justify-content: center;
  flex: none;
}
.vtrack {
  flex: 1;
  background: repeating-conic-gradient(#d4d0c8 0 25%, #fff 0 50%) 0 0 / 2px 2px;
  padding-top: 167px;
}
.vthumb {
  display: block;
  height: 15px;
  background: #e8e6e0;
  border: 1px solid;
  border-color: #fff #404040 #404040 #fff;
  box-sizing: border-box;
}

.hbar {
  height: 17px;
  background: #d4d0c8;
  display: flex;
  align-items: stretch;
}
.tabnav {
  width: 64px;
  padding: 1px 0 0 1px;
  box-sizing: border-box;
  flex: none;
}
.tabs {
  display: flex;
  flex: none;
}
.tab {
  padding: 0 9px;
  line-height: 16px;
  margin-right: -2px;
  clip-path: polygon(5px 0, 100% 0, calc(100% - 5px) 100%, 0 100%);
  background: #444;
  position: relative;
  color: #111;
  isolation: isolate;
}
.tab::before {
  content: "";
  position: absolute;
  inset: 0 1px 1px 1px;
  background: #d4d0c8;
  clip-path: polygon(5px 0, 100% 0, calc(100% - 5px) 100%, 0 100%);
  z-index: -1;
}
.tab.active {
  background: #000;
  color: #fff;
}
.tab.active::before {
  background: #000;
}
.hfill {
  flex: 1;
}
.splitter {
  width: 5px;
  background: #e8e6e0;
  border-right: 1px solid #808080;
  margin-right: 1px;
  flex: none;
}
.sbtn.h {
  height: 17px;
}
.hthumb {
  width: 17px;
  background: #e8e6e0;
  border: 1px solid;
  border-color: #fff #808080 #808080 #fff;
  box-sizing: border-box;
  flex: none;
}
.htrack {
  width: 403px;
  background: repeating-conic-gradient(#d4d0c8 0 25%, #fff 0 50%) 0 0 / 2px 2px;
  flex: none;
}
.corner {
  width: 17px;
  flex: none;
}

.strip {
  height: 5px;
  box-sizing: border-box;
  border-top: 1px solid #fff;
  background: #6a6a6a;
}
.command {
  display: flex;
  height: 35px;
}
.cmdgrip {
  width: 15px;
  background: #7e7e7e;
  flex: none;
}
.cmdgrip span {
  display: block;
  height: 3px;
  margin: 3px 2px 0;
  background: repeating-linear-gradient(90deg, #ddd 0 1px, transparent 1px 2px);
}
.cmdbody {
  flex: 1;
  font-family: "DejaVu Sans Mono", monospace;
  font-size: 11px;
  letter-spacing: 0.35px;
  white-space: pre;
  border-left: 1px solid #ddd;
}
.cmdhist {
  height: 18px;
  line-height: 17px;
  background: #c4c4c4;
  border-bottom: 1px solid #808080;
  box-sizing: border-box;
  padding-left: 1px;
}
.cmdline {
  height: 17px;
  line-height: 20px;
  background: #fff;
  padding-left: 1px;
}

.status {
  height: 23px;
  box-sizing: border-box;
  border-top: 1px solid #000;
  display: flex;
  align-items: stretch;
  background: linear-gradient(#666, #8a8a8a);
  font-family: Roboto, sans-serif;
  font-size: 11px;
}
.coords {
  width: 184px;
  padding-left: 12px;
  line-height: 22px;
  box-sizing: border-box;
  flex: none;
  font-size: 11.500px;
  color: #111;
}
.toggle {
  box-sizing: border-box;
  border-left: 1px solid #666;
  background: linear-gradient(#b8b8b8, #a2a2a2 50%, #9c9c9c);
  text-align: center;
  line-height: 22px;
  flex: none;
}
.toggle.on {
  background: linear-gradient(#b4dcea, #a2d0e2 45%, #86b6c8 55%, #aad4e4);
}
.sfill {
  flex: 1;
  border-left: 1px solid #555;
}
.modelbtn {
  width: 44px;
  background: linear-gradient(#a4a4a4, #9a9a9a);
}
.sicon {
  width: 22px;
  background: linear-gradient(#a4a4a4, #9a9a9a);
  border-left: 1px solid #666;
  display: flex;
  align-items: center;
  justify-content: center;
  box-sizing: border-box;
  flex: none;
}
.sgap {
  width: 12px;
  flex: none;
  background: linear-gradient(#777, #8a8a8a);
  border-left: 1px solid #666;
  box-sizing: border-box;
}
.sgap.small {
  width: 6px;
}
.anno {
  width: 51px;
  gap: 3px;
}
.anno .ic {
  margin-left: 2px;
}
.sgroup {
  width: 52px;
  background: #666;
  display: flex;
  align-items: center;
  justify-content: space-around;
  flex: none;
  box-shadow: inset 0 0 0 2px #6a6a6a;
}
.sarrow {
  width: 11px;
  display: flex;
  align-items: center;
  justify-content: center;
  background: linear-gradient(#777, #8a8a8a);
  flex: none;
}
.sicon.last {
  width: 20px;
  margin-right: 4px;
}

.taskbar {
  height: 27px;
  box-sizing: border-box;
  border-top: 1px solid #fff;
  padding: 2px 1px 2px 2px;
  background: #d4d0c8;
  display: flex;
  align-items: stretch;
  font-family: "DejaVu Sans", sans-serif;
  font-size: 11px;
}
button {
  font: inherit;
  color: #000;
  background: #d4d0c8;
  box-sizing: border-box;
  border: 1px solid;
  border-color: #fff #404040 #404040 #fff;
  padding: 0;
  display: flex;
  align-items: center;
  flex: none;
  white-space: nowrap;
}
.start {
  width: 53px;
  padding-left: 2px;
  gap: 1px;
  font-weight: 700;
  font-size: 11px;
  margin-right: 8px;
}
.task {
  width: 76px;
  padding-left: 3px;
  gap: 3px;
  overflow: hidden;
}
.task.active {
  font-weight: 700;
  border-color: #404040 #fff #fff #404040;
  background: repeating-conic-gradient(#fff 0 25%, #f0eee8 0 50%) 0 0 / 2px 2px;
}
.quick {
  display: flex;
  flex: none;
}
.qslot {
  width: 34.200px;
  display: flex;
  align-items: center;
  justify-content: center;
}
.tray {
  width: 220px;
  margin-left: 4px;
  box-sizing: border-box;
  border: 1px solid;
  border-color: #808080 #fff #fff #808080;
  display: flex;
  align-items: center;
  padding-left: 5px;
  gap: 6px;
  flex: none;
}
.clock {
  margin: 0 5px 0 6px;
  white-space: nowrap;
}
</style>
